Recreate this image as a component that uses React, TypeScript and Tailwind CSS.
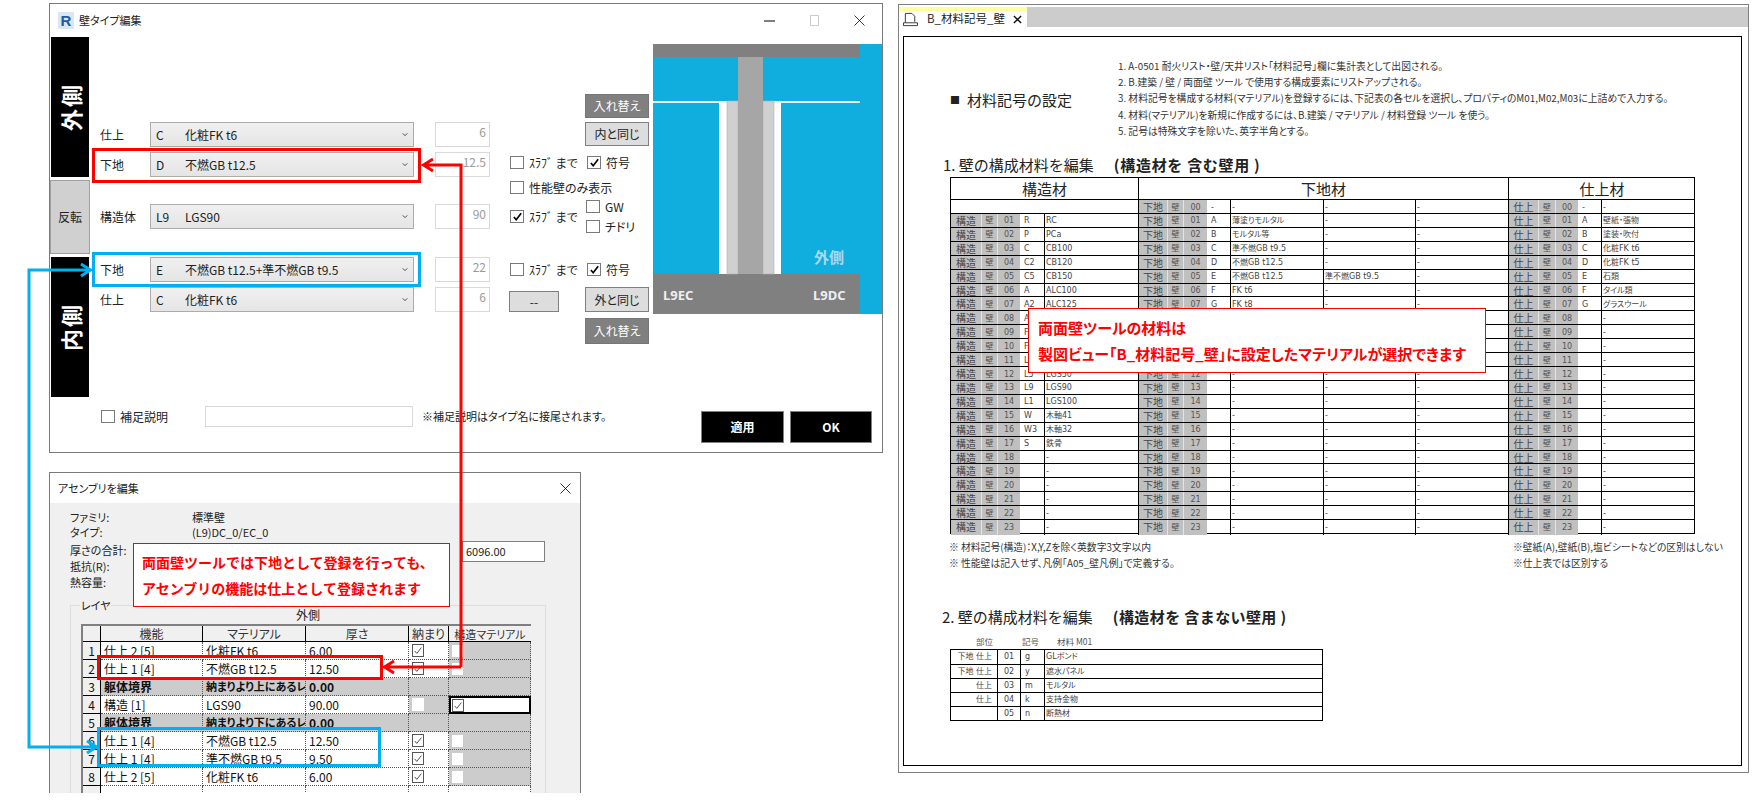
import type { ReactNode } from 'react';

const SANS = "font-['Noto_Sans_CJK_JP',sans-serif]";
const TABLE = "font-['DejaVu_Sans','Noto_Sans_CJK_JP',sans-serif]";
const PALT = "[font-feature-settings:'palt']";

function Box({ checked, soft, className = '' }: { checked?: boolean; soft?: boolean; className?: string }) {
  return (
    <span className={`shrink-0 flex items-center justify-center bg-white border ${soft ? 'w-[12px] h-[13px] border-[#555555]' : 'w-[14px] h-[13px] border-[#7a7a7a]'} ${className}`}>
      {checked && (
        <svg viewBox="0 0 12 12" className="w-[11px] h-[11px]" fill="none">
          <path d="M2 6.5 4.6 9.5 10 2.5" stroke={soft ? '#555555' : '#000000'} strokeWidth={soft ? 1.2 : 1.8} />
        </svg>
      )}
    </span>
  );
}

function Check({ label, checked, className = '' }: { label: string; checked?: boolean; className?: string }) {
  return (
    <div className={`flex items-center h-[13px] text-[12px] text-[#222222] whitespace-nowrap ${className}`}>
      <Box checked={checked} />
      <span className="ml-[5px]">{label}</span>
    </div>
  );
}

function MatRow({ label, code, name, value, className = '' }: { label: string; code: string; name: string; value: string; className?: string }) {
  return (
    <div className={`flex h-[25px] items-stretch ${className}`}>
      <span className="w-[50px] text-[12px] leading-[25px] text-[#222222]">{label}</span>
      <div className="w-[264px] flex items-center border border-[#acacac] bg-linear-to-b from-[#f0f0f0] to-[#e5e5e5] text-[12px] text-[#222222]">
        <span className="w-[34px] pl-[5px]">{code}</span>
        <span className="flex-1">{name}</span>
        <svg viewBox="0 0 8 6" className="w-[6px] h-[5px] mr-[5px]" fill="none">
          <path d="M1 1.5 4 4.5 7 1.5" stroke="#444444" strokeWidth="1.3" />
        </svg>
      </div>
      <div className="ml-[21px] w-[55px] border border-[#d9d9d9] bg-white text-right pr-[3px] text-[12px] leading-[17px] text-[#9a9a9a]">{value}</div>
    </div>
  );
}

function DarkBtn({ children, className = '' }: { children: ReactNode; className?: string }) {
  return (
    <button className={`w-[64px] bg-[#808080] border border-[#767676] text-white text-[12px] ${className}`}>{children}</button>
  );
}

function LightBtn({ children, className = '' }: { children: ReactNode; className?: string }) {
  return (
    <button className={`bg-[#dddddd] border border-[#808080] text-[#222222] text-[12px] ${className}`}>{children}</button>
  );
}

function SideLabel({ text }: { text: string }) {
  return (
    <div className="mx-[1px] h-[140px] bg-black flex items-center justify-center">
      <span className="[writing-mode:vertical-rl] [text-orientation:sideways] rotate-180 text-white font-bold text-[22px] leading-none tracking-[2px]">{text}</span>
    </div>
  );
}

function Preview() {
  return (
    <svg viewBox="0 0 229 270" className="w-[229px] h-[270px] mt-[7px] shrink-0">
      <rect width="229" height="270" fill="#10aede" />
      <rect width="207" height="13" fill="#808080" />
      <rect y="230" width="207" height="40" fill="#808080" />
      <rect y="57" width="74" height="2" fill="#eeeeee" />
      <rect x="121" y="57" width="86" height="2" fill="#eeeeee" />
      <rect x="66" y="59" width="8" height="171" fill="#ffffff" />
      <rect x="121" y="59" width="7" height="171" fill="#ffffff" />
      <rect x="74" y="57" width="11" height="173" fill="#d0d0d0" stroke="#b0b0b0" strokeWidth="0.6" />
      <rect x="110" y="57" width="11" height="173" fill="#d0d0d0" stroke="#b0b0b0" strokeWidth="0.6" />
      <rect x="85" y="13" width="25" height="217" fill="#a6a6a6" />
      <text x="161" y="219" fontSize="15" fontWeight="700" fill="#a9d9ee" fontFamily="Noto Sans CJK JP">外側</text>
      <text x="10" y="256" fontSize="13" fontWeight="700" fill="#efefef" fontFamily="Noto Sans">L9EC</text>
      <text x="160" y="256" fontSize="13" fontWeight="700" fill="#efefef" fontFamily="Noto Sans">L9DC</text>
    </svg>
  );
}

function WallDialog() {
  return (
    <div className={`absolute left-[49px] top-[3px] w-[834px] h-[450px] bg-white border border-[#7a7a7a] ${SANS} ${PALT}`}>
      <div className="h-[33px] flex items-center pl-[8px]">
        <span className="w-[16px] h-[17px] bg-[#dbe6f0] flex items-center justify-center text-[15px] font-bold leading-none text-[#1c5da6] font-['Liberation_Sans',sans-serif]">R</span>
        <span className="ml-[5px] text-[11px] text-[#222222]">壁タイプ編集</span>
        <div className="ml-auto flex">
          <span className="w-[45px] flex justify-center">
            <svg viewBox="0 0 11 11" className="w-[11px] h-[11px]"><path d="M0 6h11" stroke="#000000" /></svg>
          </span>
          <span className="w-[45px] flex justify-center">
            <svg viewBox="0 0 11 11" className="w-[11px] h-[11px]"><path d="M1.5.5h8v10h-8z" stroke="#cccccc" fill="none" /></svg>
          </span>
          <span className="w-[45px] flex justify-center">
            <svg viewBox="0 0 11 11" className="w-[11px] h-[11px]"><path d="M.5.5l10 10M10.5.5l-10 10" stroke="#000000" strokeWidth="0.8" /></svg>
          </span>
        </div>
      </div>

      <div className="flex h-[360px]">
        <div className="w-[40px] flex flex-col">
          <SideLabel text="外側" />
          <div className="mt-[3px] h-[74px] bg-[#d0d0d0] border border-[#a0a0a0] flex items-center justify-center text-[12px] text-[#222222]">反転</div>
          <div className="mt-[3px]">
            <SideLabel text="内側" />
          </div>
        </div>

        <div className="ml-[10px] w-[390px] pt-[85px]">
          <MatRow label="仕上" code="C" name="化粧FK t6" value="6" />
          <MatRow label="下地" code="D" name="不燃GB t12.5" value="12.5" className="mt-[5px]" />
          <MatRow label="構造体" code="L9" name="LGS90" value="90" className="mt-[27px]" />
          <MatRow label="下地" code="E" name="不燃GB t12.5+準不燃GB t9.5" value="22" className="mt-[28px]" />
          <MatRow label="仕上" code="C" name="化粧FK t6" value="6" className="mt-[5px]" />
        </div>

        <div className="ml-[19px] w-[140px] pt-[57px] flex flex-col">
          <DarkBtn className="h-[24px] self-end">入れ替え</DarkBtn>
          <LightBtn className="mt-[4px] w-[64px] h-[24px] self-end">内と同じ</LightBtn>
          <div className="mt-[10px] flex pl-[1px]">
            <Check label="ｽﾗﾌﾞ まで" className="w-[77px]" />
            <Check label="符号" checked />
          </div>
          <Check label="性能壁のみ表示" className="mt-[12px] pl-[1px]" />
          <div className="mt-[6px] flex items-center pl-[1px]">
            <Check label="ｽﾗﾌﾞ まで" checked className="w-[76px]" />
            <div className="flex flex-col gap-[7px]">
              <Check label="GW" />
              <Check label="チドリ" />
            </div>
          </div>
          <div className="mt-[30px] flex pl-[1px]">
            <Check label="ｽﾗﾌﾞ まで" className="w-[77px]" />
            <Check label="符号" checked />
          </div>
          <div className="mt-[11px] flex justify-between items-end">
            <LightBtn className="w-[50px] h-[21px]">--</LightBtn>
            <LightBtn className="w-[64px] h-[25px]">外と同じ</LightBtn>
          </div>
          <DarkBtn className="mt-[6px] h-[26px] self-end">入れ替え</DarkBtn>
        </div>

        <div className="ml-[4px]">
          <Preview />
        </div>
      </div>

      <div className="mt-[9px] flex items-start pl-[51px]">
        <Box className="mt-[4px]" />
        <span className="ml-[5px] w-[85px] text-[12px] leading-[21px] text-[#222222]">補足説明</span>
        <div className="w-[208px] h-[21px] border border-[#d9d9d9] bg-white" />
        <span className="ml-[9px] w-[279px] text-[11px] leading-[21px] text-[#222222] whitespace-nowrap">※補足説明はタイプ名に接尾されます。</span>
        <button className="w-[83px] h-[32px] mt-[5px] bg-black border border-[#808080] text-white text-[12px] font-bold">適用</button>
        <button className="ml-[6px] w-[82px] h-[32px] mt-[5px] bg-black border border-[#808080] text-white text-[12px] font-bold">OK</button>
      </div>
    </div>
  );
}

const LAYERS = [
  { no: '1', fn: '仕上 2 [5]', mat: '化粧FK t6', th: '6.00', wrap: true },
  { no: '2', fn: '仕上 1 [4]', mat: '不燃GB t12.5', th: '12.50', wrap: true },
  { no: '3', fn: '躯体境界', mat: '納まりより上にあるレ', th: '0.00', core: true },
  { no: '4', fn: '構造 [1]', mat: 'LGS90', th: '90.00', struct: true },
  { no: '5', fn: '躯体境界', mat: '納まりより下にあるレ', th: '0.00', core: true },
  { no: '6', fn: '仕上 1 [4]', mat: '不燃GB t12.5', th: '12.50', wrap: true },
  { no: '7', fn: '仕上 1 [4]', mat: '準不燃GB t9.5', th: '9.50', wrap: true },
  { no: '8', fn: '仕上 2 [5]', mat: '化粧FK t6', th: '6.00', wrap: true },
  { no: '', fn: '', mat: '', th: '', empty: true },
];

const LAYER_COLS = 'grid grid-cols-[18px_102px_103px_103px_40px_82px]';

function LayerTable() {
  const dot = 'border-r border-b border-dotted border-[#555555] px-[3px] overflow-hidden whitespace-nowrap leading-[17px]';
  return (
    <div className="ml-[10px] w-[450px] border-l-2 border-t-2 border-[#808080] text-[12px] text-[#111111]">
      <div className={`${LAYER_COLS} h-[16px] bg-[#f0f0f0] text-center leading-[16px] text-[#333333] border-b border-black`}>
        <span className="border-r border-black" />
        <span className="border-r border-black">機能</span>
        <span className="border-r border-black">マテリアル</span>
        <span className="border-r border-black">厚さ</span>
        <span className="border-r border-black">納まり</span>
        <span className="whitespace-nowrap text-[11px]">構造マテリアル</span>
      </div>
      {LAYERS.map((l, i) => (
        <div key={i} className={`${LAYER_COLS} h-[18px]`}>
          <span className="bg-[#f0f0f0] border-r border-b border-black text-center leading-[17px]">{l.no}</span>
          <span className={`${dot} ${l.core ? 'bg-[#cccccc] font-bold' : 'bg-white'}`}>{l.fn}</span>
          <span className={`${dot} ${l.core ? 'bg-[#cccccc] font-bold text-[11px]' : 'bg-white'}`}>{l.mat}</span>
          <span className={`${dot} ${l.core ? 'bg-[#cccccc] font-bold' : 'bg-white'}`}>{l.th}</span>
          <span className={`${dot} flex items-center ${l.core || l.struct ? 'bg-[#cccccc]' : 'bg-white'}`}>
            {l.wrap && <Box checked soft />}
            {l.struct && <span className="w-[12px] h-[13px] bg-white" />}
          </span>
          {l.struct ? (
            <span className="border-2 border-black bg-white flex items-center pl-[1px]">
              <Box checked soft />
            </span>
          ) : (
            <span className={`${dot} flex items-center ${l.empty ? 'bg-white' : 'bg-[#cccccc]'}`}>
              {l.wrap && <span className="w-[11px] h-[12px] bg-white" />}
            </span>
          )}
        </div>
      ))}
    </div>
  );
}

function AssemblyDialog() {
  return (
    <div className={`absolute left-[49px] top-[472px] w-[532px] h-[321px] overflow-hidden bg-[#f0f0f0] border-x border-t border-[#7a7a7a] ${SANS} ${PALT}`}>
      <div className="h-[30px] bg-white flex items-center pl-[8px] text-[11px] text-[#222222]">
        アセンブリを編集
        <svg viewBox="0 0 11 11" className="w-[11px] h-[11px] ml-auto mr-[9px]"><path d="M.5.5l10 10M10.5.5l-10 10" stroke="#000000" strokeWidth="0.8" /></svg>
      </div>
      <div className="pt-[6px] text-[11px] text-[#222222]">
        <div className="flex h-[15px] leading-[16px] pl-[20px]"><span className="w-[122px]">ファミリ:</span><span>標準壁</span></div>
        <div className="flex h-[18px] leading-[16px] pl-[20px]"><span className="w-[122px]">タイプ:</span><span>(L9)DC_0/EC_0</span></div>
        <div className="flex h-[16px] leading-[16px] pl-[20px]">
          <span className="w-[122px]">厚さの合計:</span>
          <span className="ml-[270px] -mt-[1px] w-[83px] h-[21px] bg-white border border-[#808080] pl-[3px] leading-[19px]">6096.00</span>
        </div>
        <div className="h-[16px] leading-[16px] pl-[20px]">抵抗(R):</div>
        <div className="h-[16px] leading-[16px] pl-[20px]">熱容量:</div>
      </div>
      <div className="relative ml-[20px] mt-[15px] w-[476px] h-[200px] border border-[#dcdcdc]">
        <span className="absolute left-[9px] -top-[8px] px-[1px] bg-[#f0f0f0] text-[11px] leading-[14px] text-[#222222]">レイヤ</span>
        <div className="h-[18px] text-center text-[12px] leading-[18px] text-[#222222]">外側</div>
        <LayerTable />
      </div>
    </div>
  );
}

const STRUCT: [string, string][] = [
  ['', ''],
  ['R', 'RC'], ['P', 'PCa'], ['C', 'CB100'], ['C2', 'CB120'], ['C5', 'CB150'], ['A', 'ALC100'], ['A2', 'ALC125'],
  ['A3', 'ALC150'], ['F', 'FB50'], ['F2', 'FB75'], ['L6', 'LGS65'], ['L5', 'LGS50'], ['L9', 'LGS90'], ['L1', 'LGS100'],
  ['W', '木軸41'], ['W3', '木軸32'], ['S', '鉄骨'],
];
const BASE: [string, string, string][] = [
  ['-', '-', '-'], ['A', '薄塗りモルタル', '-'], ['B', 'モルタル等', '-'], ['C', '準不燃GB t9.5', '-'], ['D', '不燃GB t12.5', '-'],
  ['E', '不燃GB t12.5', '準不燃GB t9.5'], ['F', 'FK t6', '-'], ['G', 'FK t8', '-'],
];
const FINISH: [string, string][] = [
  ['-', '-'], ['A', '壁紙・張物'], ['B', '塗装・吹付'], ['C', '化粧FK t6'], ['D', '化粧FK t5'], ['E', '石類'], ['F', 'タイル類'], ['G', 'グラスウール'],
];

function Tag({ kind, no }: { kind: string; no: string }) {
  const gray = 'bg-[#c0c0c0] flex items-center justify-center border-r border-[#e4e4e4]';
  return (
    <>
      <span className={`${gray} text-[10px] text-[#444444]`}>{kind}</span>
      <span className={`${gray} text-[8px] text-[#555555]`}>壁</span>
      <span className={`${gray} text-[8px] text-[#555555] border-r-0`}>{no}</span>
    </>
  );
}

function Code({ children }: { children: ReactNode }) {
  return <span className="flex items-center pl-[4px] text-[8px] text-[#444444]">{children}</span>;
}

function Name({ children }: { children: ReactNode }) {
  return <span className="flex items-center pl-[1px] border-l border-black text-[8px] text-[#444444] whitespace-nowrap overflow-hidden">{children}</span>;
}

function MaterialTable() {
  const rows = Array.from({ length: 24 }, (_, i) => i);
  return (
    <div className={`ml-[46px] mt-[2px] w-[745px] h-[357px] border border-black grid grid-rows-[21px_repeat(24,1fr)] ${TABLE} ${PALT}`}>
      <div className={`grid grid-cols-[187px_370px_187px] text-[15px] text-[#222222] text-center leading-[21px] ${SANS}`}>
        <span>構造材</span>
        <span className="border-l border-black">下地材</span>
        <span className="border-l border-black">仕上材</span>
      </div>
      {rows.map((i) => {
        const no = String(i).padStart(2, '0');
        const s = STRUCT[i];
        const b = BASE[i];
        const f = FINISH[i];
        return (
          <div key={i} className="grid grid-cols-[31px_16px_22px_24px_94px_1px_29px_16px_23px_23px_93px_92px_93px_1px_30px_17px_22px_23px_94px] border-t border-black min-h-0">
            {i === 0 ? (
              <span className="col-span-5" />
            ) : (
              <>
                <Tag kind="構造" no={no} />
                <Code>{s ? s[0] : ''}</Code>
                <Name>{s ? s[1] : '-'}</Name>
              </>
            )}
            <span className="bg-black" />
            <Tag kind="下地" no={no} />
            <Code>{b ? b[0] : ''}</Code>
            <Name>{b ? b[1] : '-'}</Name>
            <Name>{b ? b[2] : '-'}</Name>
            <Name>-</Name>
            <span className="bg-black" />
            <Tag kind="仕上" no={no} />
            <Code>{f ? f[0] : ''}</Code>
            <Name>{f ? f[1] : '-'}</Name>
          </div>
        );
      })}
    </div>
  );
}

const NON_STRUCT = [
  { part: '下地 仕上', no: '01', code: 'g', name: 'GLボンド' },
  { part: '下地 仕上', no: '02', code: 'y', name: '遮水パネル' },
  { part: '仕上', no: '03', code: 'm', name: 'モルタル' },
  { part: '仕上', no: '04', code: 'k', name: '支持金物' },
  { part: '', no: '05', code: 'n', name: '断熱材' },
];

function NonStructTable() {
  return (
    <div className={`ml-[46px] mt-[1px] w-[373px] border border-black ${TABLE} ${PALT}`}>
      {NON_STRUCT.map((r, i) => (
        <div key={r.no} className={`grid grid-cols-[47px_23px_23px_278px] h-[14px] text-[8px] text-[#444444] ${i ? 'border-t border-black' : ''}`}>
          <span className="flex items-center justify-end pr-[5px] border-r border-black">{r.part}</span>
          <span className="flex items-center justify-center border-r border-black">{r.no}</span>
          <span className="flex items-center pl-[4px]">{r.code}</span>
          <span className="flex items-center pl-[1px] border-l border-black">{r.name}</span>
        </div>
      ))}
    </div>
  );
}

function SheetPane() {
  const notes = [
    '1. A-0501 耐火リスト・壁/天井リスト「材料記号」欄に集計表として出図される。',
    '2. B.建築 / 壁 / 両面壁 ツール で使用する構成要素にリストアップされる。',
    '3. 材料記号を構成する材料(マテリアル)を登録するには、下記表の各セルを選択し、プロパティのM01,M02,M03に上詰めで入力する。',
    '4. 材料(マテリアル)を新規に作成するには、B.建築 / マテリアル / 材料登録 ツール を使う。',
    '5. 記号は特殊文字を除いた、英字半角とする。',
  ];
  return (
    <div className={`absolute left-[898px] top-[4px] w-[851px] h-[769px] bg-white border border-[#808080] pt-[2px] ${SANS}`}>
      <div className="h-[20px] bg-[#cccccc] flex">
        <div className="w-[128px] bg-white border-t-[4px] border-[#ffff9f] flex items-center pl-[4px] text-[11.5px] text-[#222222]">
          <svg viewBox="0 0 16 16" className="w-[15px] h-[15px]" fill="none" stroke="#333333">
            <path d="M2.5 1.5h7l3 3v6M2.5 1.500v10" />
            <path d="M.5 11.500h15v3H.5z" />
          </svg>
          <span className="ml-[9px]">B_材料記号_壁</span>
          <svg viewBox="0 0 10 10" className="w-[9px] h-[9px] ml-[8px]"><path d="M1 1l8 8M9 1l-8 8" stroke="#111111" strokeWidth="1.6" /></svg>
        </div>
      </div>
      <div className="ml-[4px] mt-[9px] w-[839px] h-[730px] border border-black">
        <div className="flex pt-[21px] pl-[46px]">
          <div className="w-[168px] mt-[3px] flex items-center text-[15px] leading-[20px] text-[#222222] whitespace-nowrap">
            <span className="w-[17px] text-[10px]">■</span>材料記号の設定
          </div>
          <div className={`text-[9.8px] leading-[16.2px] text-[#333333] whitespace-nowrap ${PALT}`}>
            {notes.map((n) => (
              <div key={n}>{n}</div>
            ))}
          </div>
        </div>
        <div className="mt-[16px] ml-[39px] text-[15px] leading-[20px] text-[#222222] whitespace-nowrap">
          1. 壁の構成材料を編集<span className="ml-[20px] font-bold tracking-[0.7px]">(構造材を 含む壁用 )</span>
        </div>
        <MaterialTable />
        <div className={`mt-[5px] flex pl-[45px] text-[9.8px] leading-[16px] text-[#333333] ${PALT}`}>
          <div className="w-[564px]">
            <div>※ 材料記号(構造)：X,Y,Zを除く英数字3文字以内</div>
            <div>※ 性能壁は記入せず、凡例「A05_壁凡例」で定義する。</div>
          </div>
          <div>
            <div>※壁紙(A),壁紙(B),塩ビシートなどの区別はしない</div>
            <div>※仕上表では区別する</div>
          </div>
        </div>
        <div className="mt-[36px] ml-[38px] text-[15px] leading-[20px] text-[#222222] whitespace-nowrap">
          2. 壁の構成材料を編集<span className="ml-[20px] font-bold tracking-[0.4px]">(構造材を 含まない壁用 )</span>
        </div>
        <div className="mt-[7px] ml-[72px] flex h-[14px] text-[8.5px] leading-[14px] text-[#555555]">
          <span>部位</span>
          <span className="ml-[29px]">記号</span>
          <span className="ml-[18px]">材料 M01</span>
        </div>
        <NonStructTable />
      </div>
    </div>
  );
}

function Annotations() {
  return (
    <>
      <svg viewBox="0 0 1758 809" className="absolute inset-0 w-[1758px] h-[809px] pointer-events-none" fill="none" strokeWidth="3">
        <path d="M461 667V165H424M433 159 423.500 165 433 171" stroke="#ff0000" />
        <path d="M461 667H385M394 661 384.500 667 394 673" stroke="#ff0000" />
        <path d="M90 270H29V747H96M87 741 96.500 747 87 753" stroke="#00b0f0" />
        <path d="M81 264 90.500 270 81 276" stroke="#00b0f0" />
      </svg>
      <div className="absolute left-[92px] top-[148px] w-[329px] h-[35px] border-[3px] border-[#ff0000]" />
      <div className="absolute left-[92px] top-[252px] w-[329px] h-[35px] border-[3px] border-[#00b0f0]" />
      <div className="absolute left-[97px] top-[655px] w-[286px] h-[25px] border-[3px] border-[#ff0000]" />
      <div className="absolute left-[97px] top-[727px] w-[284px] h-[40px] border-[3px] border-[#00b0f0]" />
      <div className={`absolute left-[133px] top-[543px] w-[317px] h-[64px] bg-white border border-[#ff0000] pl-[8px] pt-[5px] text-[14px] leading-[26px] font-bold text-[#ff0000] ${SANS}`}>
        <div>両面壁ツールでは下地として登録を行っても、</div>
        <div>アセンブリの機能は仕上として登録されます</div>
      </div>
      <div className={`absolute left-[1028px] top-[308px] w-[458px] h-[65px] bg-white border border-[#ff0000] pl-[9px] pt-[6px] text-[15px] leading-[26px] font-bold text-[#ff0000] whitespace-nowrap ${SANS} ${PALT}`}>
        <div>両面壁ツールの材料は</div>
        <div>製図ビュー「B_材料記号_壁」に設定したマテリアルが選択できます</div>
      </div>
    </>
  );
}

export default function App() {
  return (
    <div className="relative w-[1758px] h-[809px] bg-white overflow-hidden">
      <WallDialog />
      <AssemblyDialog />
      <SheetPane />
      <Annotations />
    </div>
  );
}
